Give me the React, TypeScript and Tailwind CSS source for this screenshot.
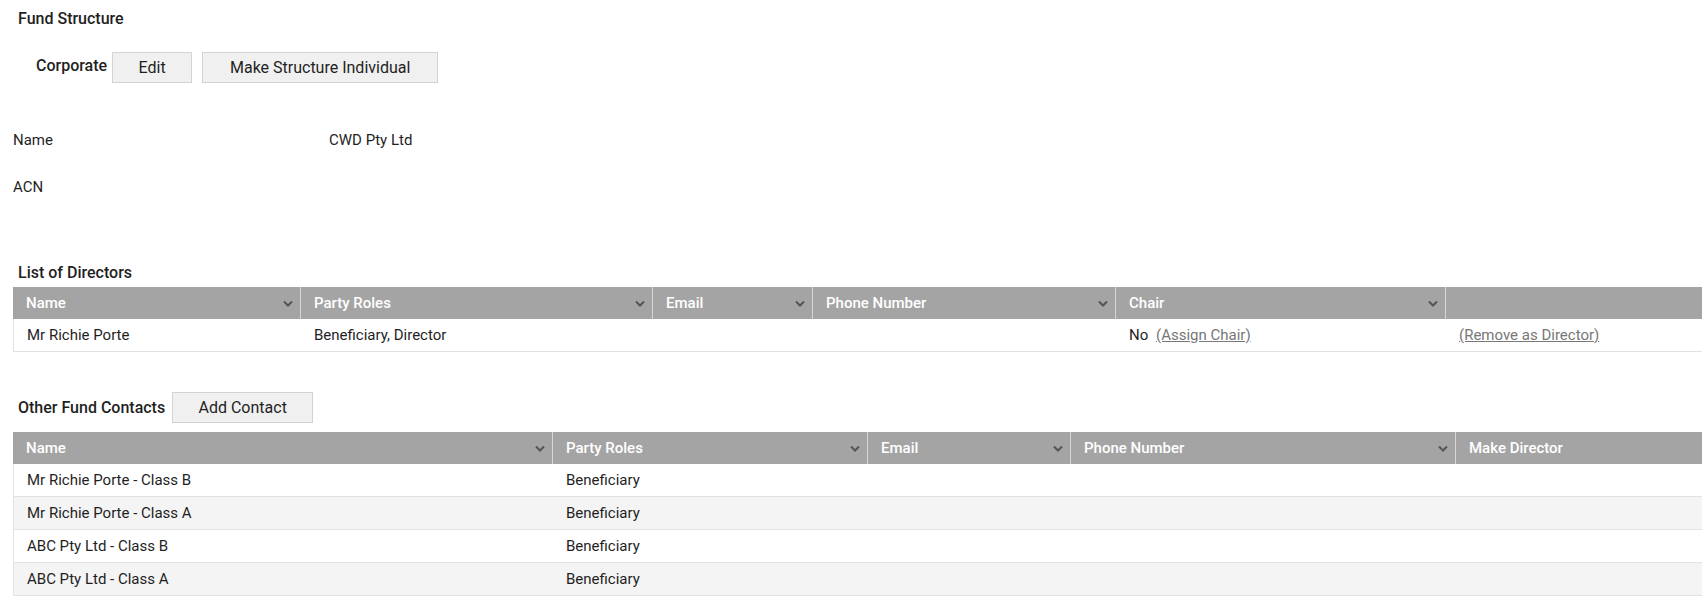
import React from 'react';

type Col = { label: string; width: string; chevron?: boolean };

function Chevron() {
  return (
    <svg width="10" height="7" viewBox="0 0 10 7" className="shrink-0">
      <polyline points="1,1.5 5,5.5 9,1.5" fill="none" stroke="#555555" strokeWidth="2" />
    </svg>
  );
}

function HeaderRow({ cols }: { cols: Col[] }) {
  return (
    <div className="flex h-[32px] bg-[#a4a4a4] text-white font-medium">
      {cols.map((c, i) => (
        <div
          key={i}
          className={`${c.width} flex items-center justify-between pl-[13px] pr-[7px] ${
            i > 0 ? 'border-l border-[#d6d6d6]' : ''
          }`}
        >
          <span>{c.label}</span>
          {c.chevron && <Chevron />}
        </div>
      ))}
    </div>
  );
}

const directorCols: Col[] = [
  { label: 'Name', width: 'w-[287px]', chevron: true },
  { label: 'Party Roles', width: 'w-[352px]', chevron: true },
  { label: 'Email', width: 'w-[160px]', chevron: true },
  { label: 'Phone Number', width: 'w-[303px]', chevron: true },
  { label: 'Chair', width: 'w-[330px]', chevron: true },
  { label: '', width: 'flex-1' },
];

const contactCols: Col[] = [
  { label: 'Name', width: 'w-[539px]', chevron: true },
  { label: 'Party Roles', width: 'w-[315px]', chevron: true },
  { label: 'Email', width: 'w-[203px]', chevron: true },
  { label: 'Phone Number', width: 'w-[385px]', chevron: true },
  { label: 'Make Director', width: 'flex-1' },
];

const contacts = [
  { name: 'Mr Richie Porte - Class B', roles: 'Beneficiary' },
  { name: 'Mr Richie Porte - Class A', roles: 'Beneficiary' },
  { name: 'ABC Pty Ltd - Class B', roles: 'Beneficiary' },
  { name: 'ABC Pty Ltd - Class A', roles: 'Beneficiary' },
];

export default function App() {
  return (
    <div className="w-[1702px] h-[596px] overflow-hidden bg-white text-[15px] text-[#1f1f1f] font-['Roboto',sans-serif]">
      {/* Fund structure */}
      <div className="pt-[9px] pl-[18px] h-[29px] leading-[20px] text-[16px] font-medium">Fund Structure</div>

      <div className="mt-[23px] pl-[36px] flex items-start">
        <span className="font-medium text-[16px] leading-[28px]">Corporate</span>
        <button className="ml-[5px] w-[80px] h-[31px] text-[16px] bg-[#f0f0f0] border border-[#d3d3d3]">Edit</button>
        <button className="ml-[10px] w-[236px] h-[31px] text-[16px] bg-[#f0f0f0] border border-[#d3d3d3]">
          Make Structure Individual
        </button>
      </div>

      <div className="mt-[34px] pl-[13px]">
        <div className="h-[47px] flex items-center">
          <span className="w-[316px]">Name</span>
          <span>CWD Pty Ltd</span>
        </div>
        <div className="h-[47px] flex items-center">
          <span className="w-[316px]">ACN</span>
        </div>
      </div>

      {/* Directors */}
      <div className="mt-[52px] pl-[18px] h-[20px] leading-[20px] text-[16px] font-medium">List of Directors</div>
      <div className="mt-[4px] ml-[13px]">
        <HeaderRow cols={directorCols} />
        <div className="flex h-[33px] items-center border-l border-b border-[#e2e2e2]">
          <div className="w-[287px] pl-[13px]">Mr Richie Porte</div>
          <div className="w-[352px] pl-[13px]">Beneficiary, Director</div>
          <div className="w-[160px]" />
          <div className="w-[303px]" />
          <div className="w-[330px] pl-[13px]">
            No{' '}
            <a className="ml-[4px] text-[#777777] underline">(Assign Chair)</a>
          </div>
          <div className="flex-1 pl-[13px]">
            <a className="text-[#777777] underline">(Remove as Director)</a>
          </div>
        </div>
      </div>

      {/* Other contacts */}
      <div className="mt-[40px] pl-[18px] flex items-center gap-[7px]">
        <span className="font-medium text-[16px]">Other Fund Contacts</span>
        <button className="w-[141px] h-[31px] text-[16px] bg-[#f0f0f0] border border-[#d3d3d3]">Add Contact</button>
      </div>
      <div className="mt-[9px] ml-[13px]">
        <HeaderRow cols={contactCols} />
        {contacts.map((c, i) => (
          <div
            key={i}
            className={`flex h-[33px] items-center border-l border-b border-[#e2e2e2] ${
              i % 2 === 1 ? 'bg-[#f4f4f4]' : 'bg-white'
            }`}
          >
            <div className="w-[539px] pl-[13px]">{c.name}</div>
            <div className="w-[315px] pl-[13px]">{c.roles}</div>
          </div>
        ))}
      </div>
    </div>
  );
}
